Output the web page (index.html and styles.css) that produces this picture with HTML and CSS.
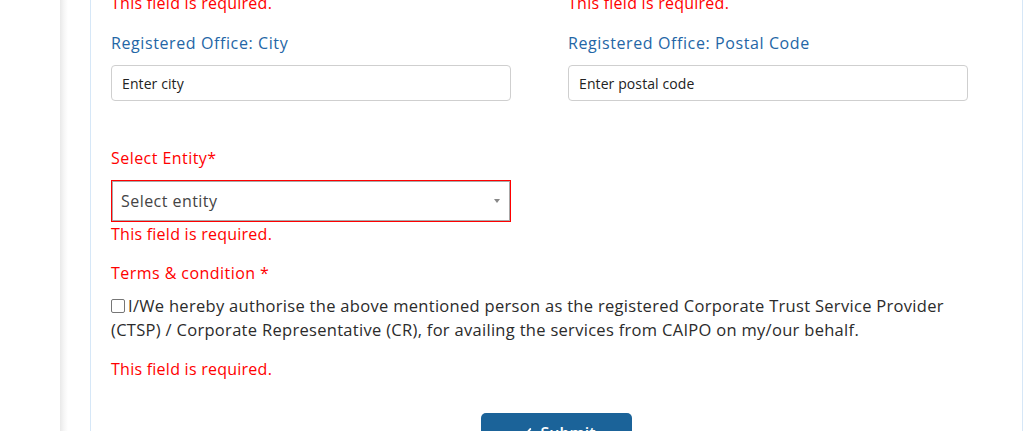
FILE: index.html
```html
<!DOCTYPE html>
<html lang="en">
<head>
<meta charset="utf-8">
<title>Registration form</title>
<link rel="stylesheet" href="styles.css">
</head>
<body>
<div class="page">
  <div class="gutter"></div>
  <main class="main">
    <section class="card">
      <div class="row">
        <div class="col"><div class="error">This field is required.</div></div>
        <div class="col"><div class="error">This field is required.</div></div>
      </div>
      <div class="row row-fields">
        <div class="col">
          <label class="label">Registered Office: City</label>
          <input class="input" type="text" placeholder="Enter city">
        </div>
        <div class="col">
          <label class="label">Registered Office: Postal Code</label>
          <input class="input" type="text" placeholder="Enter postal code">
        </div>
      </div>
      <div class="group group-entity">
        <div class="label label-error">Select Entity*</div>
        <div class="select">
          <span class="select-text">Select entity</span>
          <span class="caret"></span>
        </div>
        <div class="error">This field is required.</div>
      </div>
      <div class="group-terms">
        <div class="label label-error">Terms &amp; condition *</div>
        <div class="terms">
          <span class="checkbox"></span>I/We hereby authorise the above mentioned person as the registered Corporate Trust Service Provider (CTSP) / Corporate Representative (CR), for availing the services from CAIPO on my/our behalf.
        </div>
        <div class="error error-terms">This field is required.</div>
      </div>
      <div class="actions">
        <button class="btn" type="button">
          <svg class="btn-icon" viewBox="0 0 16 16" width="14" height="14"><path d="M2 8.5l4 4 8-9" fill="none" stroke="#fff" stroke-width="2.2" stroke-linecap="round" stroke-linejoin="round"/></svg>
          <span>Submit</span>
        </button>
      </div>
    </section>
  </main>
</div>
</body>
</html>
```

FILE: styles.css
```css
* { box-sizing: border-box; }
html, body { margin: 0; padding: 0; background: #fff; }
body {
  font-family: "Open Sans", "Liberation Sans", sans-serif;
  font-size: 16px;
  line-height: 24px;
  letter-spacing: 0.2px;
  color: #2b2b2b;
  overflow: hidden;
}
.page {
  display: flex;
  min-height: 431px;
}
.gutter {
  width: 60px;
  flex: none;
}
.main {
  flex: 1;
  min-width: 0;
  background: linear-gradient(to right, #e9e9e9 0, #f6f6f6 4px, #fff 8px);
  padding-left: 30px;
  padding-right: 7px;
}
.card {
  margin-top: -9px;
  border-left: 1px solid #d6e7f7;
  border-right: 1px solid #d6e7f7;
  padding: 0 20px 40px 20px;
  min-height: 460px;
}
.row {
  display: grid;
  grid-template-columns: 400px 400px;
  column-gap: 57px;
}
.row-fields { margin-top: 16px; }
.label {
  display: block;
  color: #2466a6;
  font-size: 16px;
  font-weight: 500;
  letter-spacing: 0.6px;
  line-height: 24px;
  margin-bottom: 10px;
}
.label-error { color: #ff0000; letter-spacing: 0.45px; }
.error {
  color: #ff0000;
  font-size: 16px;
  line-height: 24px;
  letter-spacing: 0.25px;
}
.input {
  display: block;
  width: 400px;
  height: 36px;
  border: 1px solid #cfcfcf;
  border-radius: 4px;
  padding: 0 10px;
  font-family: inherit;
  font-size: 14px;
  letter-spacing: 0.1px;
  color: #222;
  background: #fff;
  outline: none;
}
.input::placeholder { color: #222; opacity: 1; }
.group { width: 400px; }
.group-entity { margin-top: 45px; }
.select {
  display: flex;
  align-items: center;
  justify-content: space-between;
  height: 40px;
  margin: 11px 1px 1px 1px;
  border: 1px solid #a8a8a8;
  outline: 1px solid #ff0000;
  padding: 0 9px 0 8px;
  color: #444;
  font-size: 16px;
  letter-spacing: 0.45px;
}
.caret {
  width: 0;
  height: 0;
  border-left: 3px solid transparent;
  border-right: 3px solid transparent;
  border-top: 4px solid #888;
}
.group-terms { margin-top: 15px; }
.group-terms .label { margin-bottom: 9px; }
.terms {
  color: #2b2b2b;
  font-size: 16.5px;
  letter-spacing: 0.3px;
  line-height: 24px;
  max-width: 870px;
}
.checkbox {
  display: inline-block;
  width: 14px;
  height: 14px;
  border: 1px solid #767676;
  border-radius: 2px;
  margin-right: 3px;
  vertical-align: -1px;
  background: #fff;
}
.error-terms { margin-top: 15px; }
.actions {
  display: flex;
  justify-content: center;
  margin-top: 32px;
}
.btn {
  display: inline-flex;
  align-items: center;
  gap: 9px;
  width: 151px;
  height: 40px;
  justify-content: center;
  background: #1b6399;
  color: #fff;
  border: none;
  border-radius: 5px;
  font-family: inherit;
  font-size: 16px;
  font-weight: 600;
  padding: 0 16px;
}
.btn-icon { flex: none; }
```
